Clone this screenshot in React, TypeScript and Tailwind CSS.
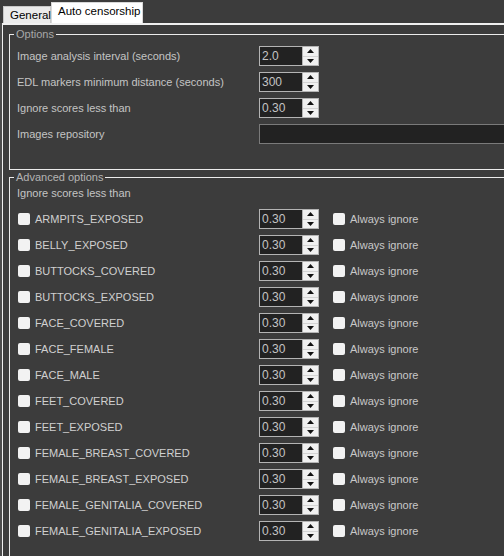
import React from "react";

const categories = [
  "ARMPITS_EXPOSED",
  "BELLY_EXPOSED",
  "BUTTOCKS_COVERED",
  "BUTTOCKS_EXPOSED",
  "FACE_COVERED",
  "FACE_FEMALE",
  "FACE_MALE",
  "FEET_COVERED",
  "FEET_EXPOSED",
  "FEMALE_BREAST_COVERED",
  "FEMALE_BREAST_EXPOSED",
  "FEMALE_GENITALIA_COVERED",
  "FEMALE_GENITALIA_EXPOSED",
];

function Arrow({ up }: { up?: boolean }) {
  return (
    <svg width="7" height="4" viewBox="0 0 7 4">
      {up ? <path d="M3.5 0L7 4H0z" fill="#111" /> : <path d="M0 0h7L3.5 4z" fill="#111" />}
    </svg>
  );
}

function Spinner({ value }: { value: string }) {
  return (
    <div className="flex h-[20px] w-[60px] border border-[#b4b4b4] bg-[#222222]">
      <div className="flex-1 pl-[2px] text-[12px] leading-[18px] text-[#c4c4c4]">{value}</div>
      <div className="flex w-[16px] flex-col border-l border-[#b4b4b4] bg-[#f0f0f0]">
        <div className="flex flex-1 items-center justify-center border-b border-[#d4d4d4]">
          <Arrow up />
        </div>
        <div className="flex flex-1 items-center justify-center">
          <Arrow />
        </div>
      </div>
    </div>
  );
}

function Check() {
  return <div className="h-[12px] w-[12px] shrink-0 rounded-[2px] bg-[#f2f2f2]" />;
}

function OptionRow({ label, children }: { label: string; children: React.ReactNode }) {
  return (
    <div className="flex h-[26px] items-center">
      <div className="w-[242px] text-[#c4c4c4]">{label}</div>
      {children}
    </div>
  );
}

export default function App() {
  return (
    <div
      className="h-[556px] w-[504px] overflow-hidden bg-[#3c3c3c] text-[11px] leading-[14px]"
      style={{ fontFamily: '"Liberation Sans", Arial, sans-serif' }}
    >
      <div className="flex h-[23px] items-end pl-[3px]">
        <div className="h-[17px] w-[48px] border border-b-0 border-[#c8c8c8] bg-[#ebebeb] pl-[6px] text-[11.5px] leading-[16px] text-black">
          General
        </div>
        <div className="h-[21px] w-[92px] border border-b-0 border-[#d8d8d8] bg-white pl-[6px] text-[11.5px] leading-[17px] text-black">
          Auto censorship
        </div>
      </div>

      <div className="flex h-full">
        <div className="w-[2px] shrink-0 bg-[#4c4c4c]" />
        <div className="flex-1 border-l border-t-2 border-[#f0f0f0] pl-[6px] pt-[2px]">
          <fieldset className="w-[600px] border border-[#ececec] pb-[22px] pl-[7px] pt-[2px]">
            <legend className="ml-[-3px] px-[2px] leading-[14px] text-[#a8a8a8]">Options</legend>
            <OptionRow label="Image analysis interval (seconds)">
              <Spinner value="2.0" />
            </OptionRow>
            <OptionRow label="EDL markers minimum distance (seconds)">
              <Spinner value="300" />
            </OptionRow>
            <OptionRow label="Ignore scores less than">
              <Spinner value="0.30" />
            </OptionRow>
            <OptionRow label="Images repository">
              <div className="h-[20px] flex-1 border border-[#7a7a7a] bg-[#222222]" />
            </OptionRow>
          </fieldset>

          <fieldset className="w-[600px] border border-[#ececec] pb-[20px] pl-[7px] pt-[2px]">
            <legend className="ml-[-3px] px-[2px] leading-[14px] text-[#b4b4b4]">Advanced options</legend>
            <div className="mb-[6px] text-[#c4c4c4]">Ignore scores less than</div>
            {categories.map((c) => (
              <div key={c} className="flex h-[26px] items-center">
                <div className="flex w-[242px] items-center gap-[5px] pl-[1px] text-[#d0d0d0]">
                  <Check />
                  <span>{c}</span>
                </div>
                <Spinner value="0.30" />
                <div className="ml-[14px] flex items-center gap-[5px] text-[#c8c8c8]">
                  <Check />
                  <span>Always ignore</span>
                </div>
              </div>
            ))}
          </fieldset>
        </div>
      </div>
    </div>
  );
}
